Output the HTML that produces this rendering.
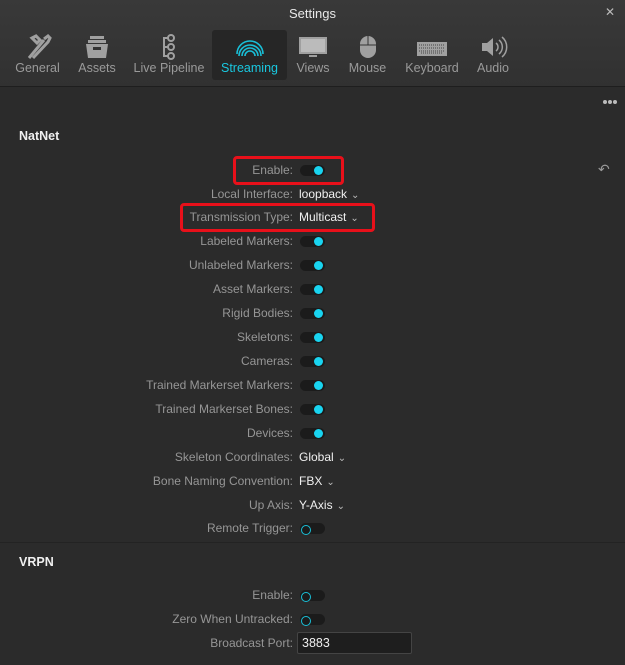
<!DOCTYPE html>
<html><head><meta charset="utf-8"><style>
*{margin:0;padding:0;box-sizing:border-box}
body{width:625px;height:665px;background:#2b2b2b;font-family:"Liberation Sans",sans-serif;overflow:hidden;position:relative;color:#aaa}
#hdr{position:absolute;left:0;top:0;width:625px;height:87px;background:linear-gradient(#393939,#313131);border-bottom:1px solid #1e1e1e}
.title{position:absolute;top:6px;width:100%;text-align:center;color:#e8e8e8;font-size:13px}
.x{position:absolute;right:10px;top:5px;color:#bbb;font-size:12px}
.tab{position:absolute;top:30px;height:50px;text-align:center;font-size:12.5px;color:#9a9a9a}
.tab svg{display:block;margin:4px auto 0}
.tab span{position:absolute;bottom:5px;left:0;right:0}
.row{position:absolute;left:0;width:625px;height:20px;font-size:12px}
.lbl{position:absolute;right:332px;top:3px;color:#969696;white-space:nowrap}
.val{position:absolute;left:299px;top:3px;color:#f0f0f0;white-space:nowrap}
.tg{position:absolute;left:300px;top:5px;width:25px;height:11px;border-radius:6px;background:#1b1b1b}
.tg.on::after{content:"";position:absolute;right:2px;top:1px;width:9px;height:9px;border-radius:50%;background:#19d4f0}
.tg.off::after{content:"";position:absolute;left:1px;top:1.5px;width:8px;height:8px;border-radius:50%;border:1.3px solid #19c0d8}
.sec{position:absolute;left:19px;font-size:12.5px;font-weight:bold;color:#f0f0f0}
.chev{color:#bbb;font-size:10px;margin-left:4px}
.red{position:absolute;border:3px solid #e8101a;border-radius:4px}
.dot{position:absolute;top:100px;width:4px;height:4px;border-radius:50%;background:#bbb}
</style></head><body>
<div id="hdr">
<div class="title">Settings</div><div class="x">✕</div>
<div class="tab" style="left:10px;width:55px"><svg width="28" height="26" viewBox="0 0 28 26"><path d="M5 24L20 6M8 4l4 -2 4 4-3 3zM9 24L24 8l2-4-2-2-4 3" stroke="#a0a0a0" stroke-width="3" fill="none"/></svg><span>General</span></div>
<div class="tab" style="left:72px;width:50px"><svg width="26" height="26" viewBox="0 0 26 26"><rect x="6" y="2" width="14" height="3" fill="#a0a0a0"/><rect x="4" y="6" width="18" height="3" fill="#a0a0a0"/><path d="M2 10h22l-2 14H4z" fill="#a0a0a0"/><rect x="9" y="13" width="8" height="3" fill="#333"/></svg><span>Assets</span></div>
<div class="tab" style="left:130px;width:78px"><svg width="20" height="26" viewBox="0 0 20 26"><g fill="none" stroke="#a0a0a0" stroke-width="2"><circle cx="12" cy="4" r="3"/><circle cx="12" cy="13" r="3"/><circle cx="12" cy="22" r="3"/><path d="M9 4H5v18h4M5 13h4"/></g></svg><span>Live Pipeline</span></div>
<div class="tab" style="left:212px;width:75px;background:#262626;border-radius:3px;color:#19c8e0"><svg width="28" height="26" viewBox="0 0 28 26"><g fill="none" stroke="#19c0d8" stroke-width="1.6"><path d="M3 22A11 11 0 0 1 25 22"/><path d="M6 22A8 8 0 0 1 22 22"/><path d="M9 22A5 5 0 0 1 19 22"/><path d="M1 20A13 13 0 0 1 27 20"/></g></svg><span>Streaming</span></div>
<div class="tab" style="left:292px;width:42px"><svg width="30" height="26" viewBox="0 0 30 26"><rect x="1" y="3" width="28" height="17" fill="#a0a0a0"/><rect x="3" y="5" width="24" height="13" fill="#bbb"/><rect x="11" y="21" width="8" height="2" fill="#a0a0a0"/></svg><span>Views</span></div>
<div class="tab" style="left:345px;width:45px"><svg width="20" height="26" viewBox="0 0 20 26"><rect x="2" y="2" width="16" height="22" rx="8" fill="#a0a0a0"/><path d="M2 11h16M10 2v9" stroke="#333" stroke-width="1"/></svg><span>Mouse</span></div>
<div class="tab" style="left:402px;width:60px"><svg width="32" height="26" viewBox="0 0 32 26"><rect x="1" y="8" width="30" height="14" fill="#a0a0a0"/><g stroke="#444" stroke-width="1"><path d="M3 11h26M3 14h26M3 17h26M5 19h22" stroke-dasharray="1 1"/></g></svg><span>Keyboard</span></div>
<div class="tab" style="left:472px;width:42px"><svg width="30" height="26" viewBox="0 0 30 26"><path d="M4 9h5l6-5v18l-6-5H4z" fill="#a0a0a0"/><g fill="none" stroke="#a0a0a0" stroke-width="1.5"><path d="M18 9a5 5 0 0 1 0 8M21 6a9 9 0 0 1 0 14M24 3a13 13 0 0 1 0 20"/></g></svg><span>Audio</span></div>
</div>
<div class="dot" style="left:603px"></div><div class="dot" style="left:608px"></div><div class="dot" style="left:613px"></div>
<div style="position:absolute;left:598px;top:161px;color:#999;font-size:14px">↶</div>
<div class="sec" style="top:129px">NatNet</div>

<div class="row" style="top:160px"><div class="lbl">Enable:</div><div class="tg on"></div></div>
<div class="row" style="top:184px"><div class="lbl">Local Interface:</div><div class="val">loopback<span class="chev">⌄</span></div></div>
<div class="row" style="top:207px"><div class="lbl">Transmission Type:</div><div class="val">Multicast<span class="chev">⌄</span></div></div>
<div class="row" style="top:231px"><div class="lbl">Labeled Markers:</div><div class="tg on"></div></div>
<div class="row" style="top:255px"><div class="lbl">Unlabeled Markers:</div><div class="tg on"></div></div>
<div class="row" style="top:279px"><div class="lbl">Asset Markers:</div><div class="tg on"></div></div>
<div class="row" style="top:303px"><div class="lbl">Rigid Bodies:</div><div class="tg on"></div></div>
<div class="row" style="top:327px"><div class="lbl">Skeletons:</div><div class="tg on"></div></div>
<div class="row" style="top:351px"><div class="lbl">Cameras:</div><div class="tg on"></div></div>
<div class="row" style="top:375px"><div class="lbl">Trained Markerset Markers:</div><div class="tg on"></div></div>
<div class="row" style="top:399px"><div class="lbl">Trained Markerset Bones:</div><div class="tg on"></div></div>
<div class="row" style="top:423px"><div class="lbl">Devices:</div><div class="tg on"></div></div>
<div class="row" style="top:447px"><div class="lbl">Skeleton Coordinates:</div><div class="val">Global<span class="chev">⌄</span></div></div>
<div class="row" style="top:471px"><div class="lbl">Bone Naming Convention:</div><div class="val">FBX<span class="chev">⌄</span></div></div>
<div class="row" style="top:495px"><div class="lbl">Up Axis:</div><div class="val">Y-Axis<span class="chev">⌄</span></div></div>
<div class="row" style="top:518px"><div class="lbl">Remote Trigger:</div><div class="tg off"></div></div>

<div style="position:absolute;left:0;top:542px;width:625px;height:1px;background:#232323"></div>
<div class="sec" style="top:555px">VRPN</div>
<div class="row" style="top:585px"><div class="lbl">Enable:</div><div class="tg off"></div></div>
<div class="row" style="top:609px"><div class="lbl">Zero When Untracked:</div><div class="tg off"></div></div>
<div class="row" style="top:633px"><div class="lbl">Broadcast Port:</div></div>
<div style="position:absolute;left:297px;top:632px;width:115px;height:22px;background:#1e1e1e;border:1px solid #444;border-radius:2px;color:#f0f0f0;font-size:12.5px;padding:3px 4px">3883</div>

<div class="red" style="left:233px;top:156px;width:111px;height:29px"></div>
<div class="red" style="left:180px;top:203px;width:195px;height:29px"></div>
</body></html>
